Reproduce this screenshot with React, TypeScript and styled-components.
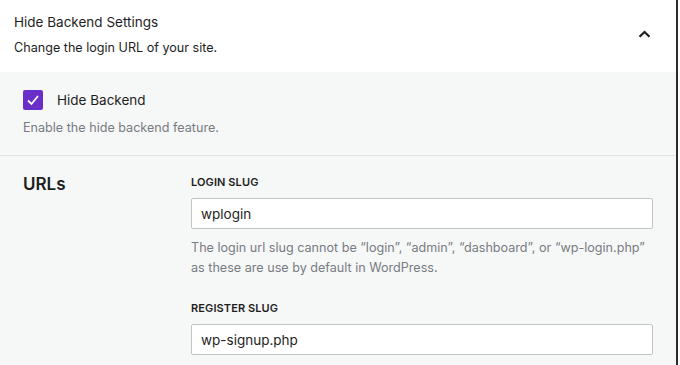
import React from 'react';
import styled, { createGlobalStyle } from 'styled-components';

const GlobalStyle = createGlobalStyle`
  html, body {
    margin: 0;
    padding: 0;
    background: #fff;
  }
  body {
    font-family: Inter, 'Noto Sans', sans-serif;
    color: #1e1e1e;
    -webkit-font-smoothing: antialiased;
  }
`;

const Frame = styled.div`
  width: 676px;
  height: 365px;
  border-right: 2px solid #2c2c2c;
  overflow: hidden;
  display: flex;
  flex-direction: column;
`;

const Header = styled.div`
  flex-shrink: 0;
  height: 72px;
  box-sizing: border-box;
  padding: 14px 24px 0 14px;
  display: flex;
  justify-content: space-between;
  background: #fff;
`;

const Title = styled.h2`
  margin: 0;
  font-size: 13.5px;
  font-weight: 400;
  line-height: 17px;
`;

const Subtitle = styled.p`
  margin: 8px 0 0;
  font-size: 12.6px;
  line-height: 17px;
  color: #1e1e1e;
`;

const Toggle = styled.button`
  border: 0;
  background: none;
  padding: 0;
  margin-top: 15px;
  width: 16px;
  height: 10px;
  display: flex;
  align-items: center;
  justify-content: center;
`;

const Panel = styled.div`
  flex: 1;
  background: #f6f7f7;
`;

const FeatureBlock = styled.div`
  flex-shrink: 0;
  padding: 18px 23px 0;
  height: 84px;
  box-sizing: border-box;
  border-bottom: 1px solid #e2e4e7;
`;

const CheckRow = styled.label`
  display: flex;
  align-items: center;
  gap: 14px;
  font-size: 13.5px;
  line-height: 20px;
`;

const Box = styled.span`
  width: 20px;
  height: 20px;
  border-radius: 2px;
  background: #6a2fc9;
  display: flex;
  align-items: center;
  justify-content: center;
`;

const Help = styled.p<{ $top?: number }>`
  margin: ${(p) => p.$top ?? 0}px 0 0;
  font-size: 12.6px;
  line-height: 20px;
  color: #787c82;
  white-space: nowrap;
`;

const Section = styled.div`
  display: grid;
  grid-template-columns: 168px 462px;
  padding: 18px 23px 0;
`;

const SectionTitle = styled.h3`
  margin: 0;
  font-size: 17px;
  font-weight: 600;
  line-height: 20px;
`;

const Field = styled.div`
  display: flex;
  flex-direction: column;
  margin-bottom: 22px;
`;

const FieldLabel = styled.label`
  font-size: 11px;
  font-weight: 600;
  text-transform: uppercase;
  line-height: 16px;
  letter-spacing: 0.1px;
  margin-bottom: 8px;
`;

const Input = styled.input`
  box-sizing: border-box;
  height: 31px;
  width: 100%;
  border: 1px solid #c3c4c7;
  border-radius: 2px;
  background: #fff;
  padding: 0 9px;
  font-family: inherit;
  font-size: 13.5px;
  color: #1e1e1e;
  outline: none;
`;

export default function App() {
  return (
    <>
      <GlobalStyle />
      <Frame>
        <Header>
          <div>
            <Title>Hide Backend Settings</Title>
            <Subtitle>Change the login URL of your site.</Subtitle>
          </div>
          <Toggle aria-label="Collapse">
            <svg width="13" height="8" viewBox="0 0 13 8">
              <path d="M1.5 6.8 L6.5 2 L11.5 6.8" fill="none" stroke="#1e1e1e" strokeWidth="2.2" />
            </svg>
          </Toggle>
        </Header>
        <Panel>
          <FeatureBlock>
            <CheckRow>
              <Box>
                <svg width="14" height="12" viewBox="0 0 14 12">
                  <path d="M2 6.5 L5.5 10 L12 2" fill="none" stroke="#fff" strokeWidth="1.8" />
                </svg>
              </Box>
              Hide Backend
            </CheckRow>
            <Help $top={8}>Enable the hide backend feature.</Help>
          </FeatureBlock>
          <Section>
            <SectionTitle>URLs</SectionTitle>
            <div>
              <Field>
                <FieldLabel>Login Slug</FieldLabel>
                <Input defaultValue="wplogin" />
                <Help $top={9}>
                  The login url slug cannot be “login”, “admin”, “dashboard”, or “wp-login.php”
                  <br />
                  as these are use by default in WordPress.
                </Help>
              </Field>
              <Field>
                <FieldLabel>Register Slug</FieldLabel>
                <Input defaultValue="wp-signup.php" />
              </Field>
            </div>
          </Section>
        </Panel>
      </Frame>
    </>
  );
}
